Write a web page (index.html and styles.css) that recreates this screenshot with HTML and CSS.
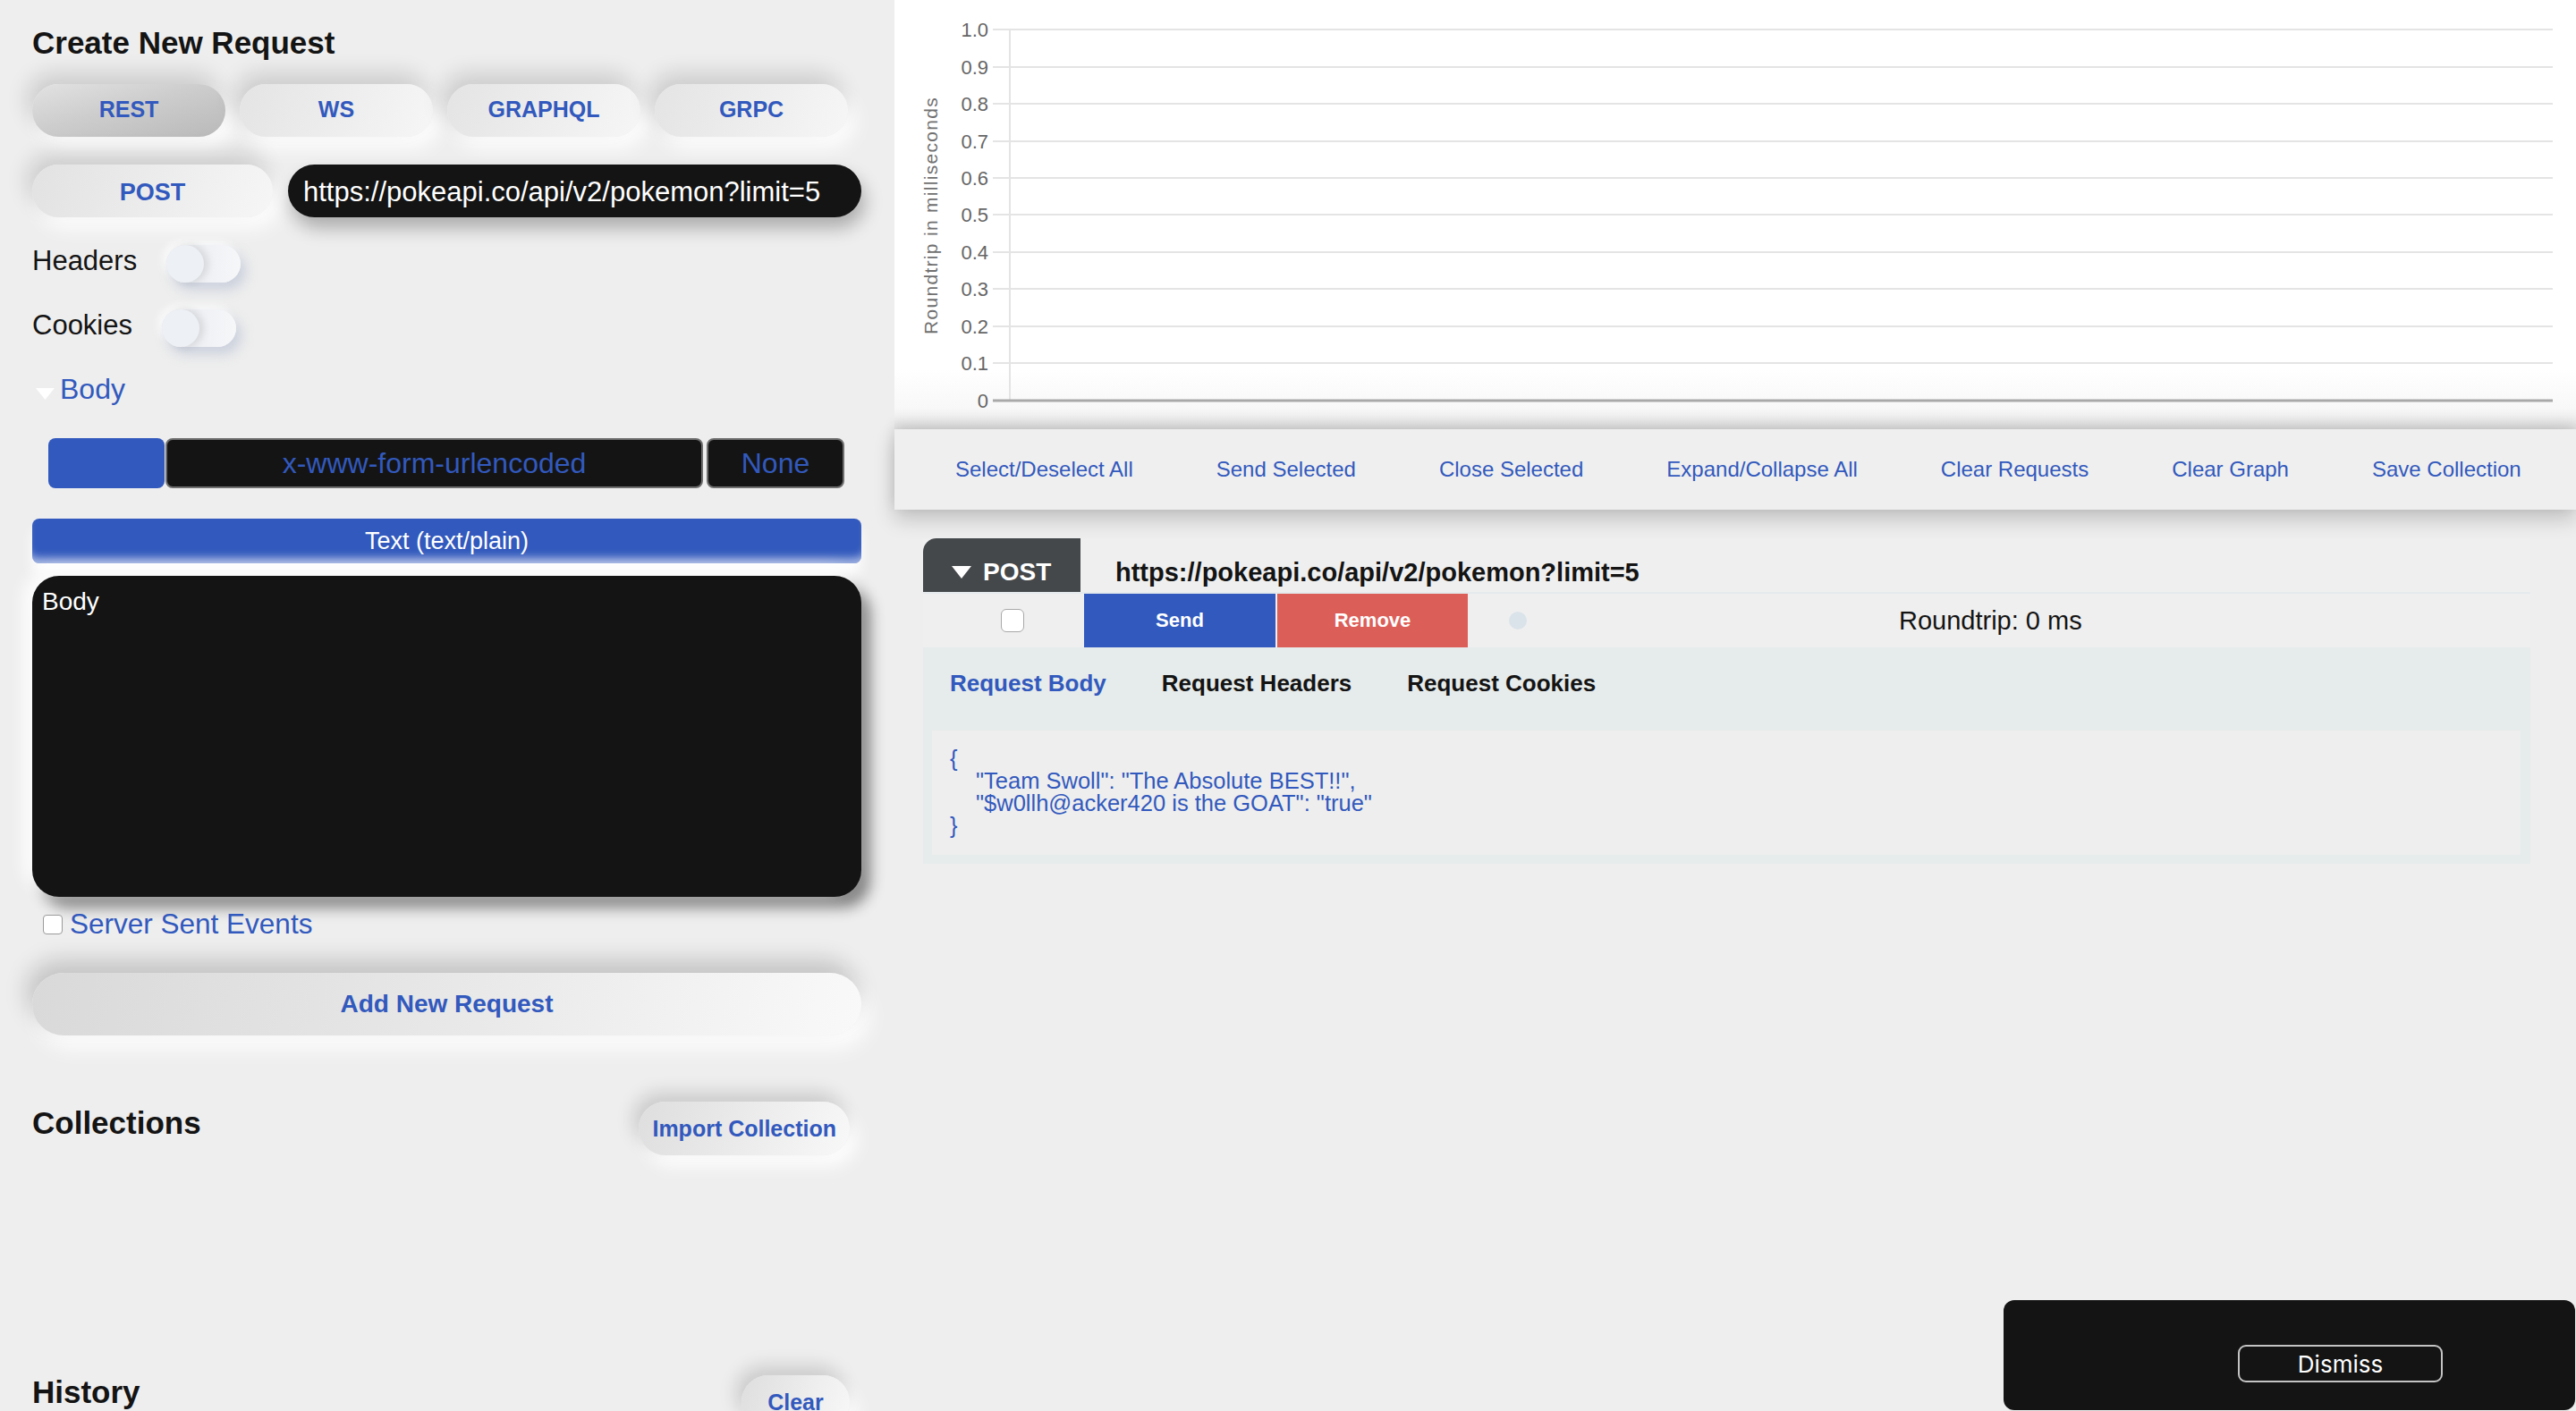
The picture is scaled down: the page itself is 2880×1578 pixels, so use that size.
FILE: index.html
```html
<!DOCTYPE html>
<html lang="en">
<head>
<meta charset="utf-8">
<title>Swell</title>
<link rel="stylesheet" href="styles.css">
</head>
<body>
<div class="app">
  <aside class="composer">
    <h1 class="title">Create New Request</h1>
    <div class="modes">
      <button class="mode active">REST</button>
      <button class="mode">WS</button>
      <button class="mode">GRAPHQL</button>
      <button class="mode">GRPC</button>
    </div>
    <div class="url-row">
      <button class="method">POST</button>
      <div class="url-input">https://pokeapi.co/api/v2/pokemon?limit=5</div>
    </div>
    <div class="toggle-row">
      <span class="toggle-label">Headers</span>
      <span class="toggle"><span class="knob"></span></span>
    </div>
    <div class="toggle-row cookies">
      <span class="toggle-label">Cookies</span>
      <span class="toggle"><span class="knob"></span></span>
    </div>
    <div class="body-summary">
      <svg class="caret" width="21" height="13" viewBox="0 0 21 13"><path d="M0 0H21L10.5 13Z" fill="#ffffff"/></svg>
      <span>Body</span>
    </div>
    <div class="body-type">
      <span class="seg seg-blue"></span>
      <span class="seg seg-dark seg-wide">x-www-form-urlencoded</span>
      <span class="seg seg-dark seg-none">None</span>
    </div>
    <div class="text-plain">Text (text/plain)</div>
    <div class="body-editor">Body</div>
    <label class="sse"><span class="check"></span>Server Sent Events</label>
    <button class="add-btn">Add New Request</button>
    <div class="section-head">
      <h2 class="section-title">Collections</h2>
      <button class="pill-btn">Import Collection</button>
    </div>
    <div class="section-head history">
      <h2 class="section-title">History</h2>
      <button class="pill-btn clear-btn">Clear</button>
    </div>
  </aside>

  <main class="workspace">
    <div class="chart">
      <svg class="chart-svg" width="1880" height="480" viewBox="0 0 1880 480">
        <g class="grid">
          <line x1="110" y1="33" x2="1854" y2="33"/>
          <line x1="110" y1="75" x2="1854" y2="75"/>
          <line x1="110" y1="116" x2="1854" y2="116"/>
          <line x1="110" y1="158" x2="1854" y2="158"/>
          <line x1="110" y1="199" x2="1854" y2="199"/>
          <line x1="110" y1="240" x2="1854" y2="240"/>
          <line x1="110" y1="282" x2="1854" y2="282"/>
          <line x1="110" y1="323" x2="1854" y2="323"/>
          <line x1="110" y1="365" x2="1854" y2="365"/>
          <line x1="110" y1="406" x2="1854" y2="406"/>
          <line x1="129" y1="33" x2="129" y2="448"/>
        </g>
        <line class="zero" x1="110" y1="448" x2="1854" y2="448"/>
        <g class="ticks">
          <text x="105" y="33">1.0</text>
          <text x="105" y="75">0.9</text>
          <text x="105" y="116">0.8</text>
          <text x="105" y="158">0.7</text>
          <text x="105" y="199">0.6</text>
          <text x="105" y="240">0.5</text>
          <text x="105" y="282">0.4</text>
          <text x="105" y="323">0.3</text>
          <text x="105" y="365">0.2</text>
          <text x="105" y="406">0.1</text>
          <text x="105" y="448">0</text>
        </g>
        <text class="axis-title" transform="translate(48 241) rotate(-90)">Roundtrip in milliseconds</text>
      </svg>
    </div>

    <nav class="toolbar">
      <span class="tool">Select/Deselect All</span>
      <span class="tool">Send Selected</span>
      <span class="tool">Close Selected</span>
      <span class="tool">Expand/Collapse All</span>
      <span class="tool">Clear Requests</span>
      <span class="tool">Clear Graph</span>
      <span class="tool">Save Collection</span>
    </nav>

    <section class="card">
      <div class="card-head">
        <div class="method-tab">
          <svg width="22" height="14" viewBox="0 0 22 14"><path d="M0 0H22L11 14Z" fill="#ffffff"/></svg>
          <span>POST</span>
        </div>
        <span class="card-url">https://pokeapi.co/api/v2/pokemon?limit=5</span>
      </div>
      <div class="card-actions">
        <div class="check-cell"><span class="card-check"></span></div>
        <button class="act send">Send</button>
        <button class="act remove">Remove</button>
        <span class="status-dot"></span>
        <span class="roundtrip">Roundtrip: 0 ms</span>
      </div>
      <div class="card-tabs">
        <span class="ctab active">Request Body</span>
        <span class="ctab">Request Headers</span>
        <span class="ctab">Request Cookies</span>
      </div>
      <div class="card-body">
        <div class="json"><div>{</div><div class="ind">"Team Swoll": "The Absolute BEST!!",</div><div class="ind">"$w0llh@acker420 is the GOAT": "true"</div><div>}</div></div>
      </div>
    </section>
  </main>
</div>

<div class="toast">
  <button class="dismiss">Dismiss</button>
</div>
</body>
</html>
```

FILE: styles.css
```css
* { box-sizing: border-box; }

html, body {
  margin: 0;
  height: 100%;
}

body {
  background: #eeeeee;
  font-family: "Liberation Sans", Arial, sans-serif;
  color: #141414;
  overflow: hidden;
}

button {
  font-family: "Liberation Sans", Arial, sans-serif;
  padding: 0;
  border: 0;
  cursor: pointer;
}

.app {
  display: grid;
  grid-template-columns: 1000px 1fr;
  height: 100vh;
  overflow: hidden;
}

/* ---------- left composer ---------- */
.composer {
  padding: 28px 37px 0 36px;
  display: flex;
  flex-direction: column;
}

.title {
  margin: 0;
  font-size: 35px;
  line-height: 40px;
  font-weight: 700;
  color: #141414;
}

.modes {
  margin-top: 26px;
  display: flex;
  gap: 16px;
}

.mode {
  width: 216px;
  height: 59px;
  border-radius: 30px;
  font-size: 25px;
  font-weight: 700;
  color: #3259bd;
  padding-bottom: 2px;
  background: linear-gradient(110deg, #e4e4e4 0%, #f6f6f6 100%);
  box-shadow: -6px -12px 24px rgba(0, 0, 0, 0.14), 8px 12px 22px rgba(255, 255, 255, 0.95);
}

.mode.active {
  background: linear-gradient(165deg, #e2e2e2 0%, #cdcdcd 45%, #b9b9b9 100%);
  box-shadow: -6px -12px 24px rgba(0, 0, 0, 0.14), 8px 12px 22px rgba(255, 255, 255, 0.9);
}

.url-row {
  margin-top: 31px;
  display: flex;
  gap: 17px;
  height: 59px;
}

.method {
  width: 269px;
  height: 59px;
  border-radius: 30px;
  font-size: 27px;
  font-weight: 700;
  color: #3259bd;
  padding-top: 4px;
  background: linear-gradient(110deg, #e2e2e2 0%, #f6f6f6 100%);
  box-shadow: -6px -12px 24px rgba(0, 0, 0, 0.14), 8px 12px 22px rgba(255, 255, 255, 0.95);
}

.url-input {
  flex: 1;
  height: 59px;
  border-radius: 30px;
  background: #141414;
  color: #ffffff;
  font-size: 31px;
  padding: 2px 0 0 17px;
  display: flex;
  align-items: center;
  box-shadow: 4px 12px 20px rgba(0, 0, 0, 0.28);
}

.toggle-row {
  margin-top: 31px;
  height: 42px;
  display: flex;
  align-items: center;
  gap: 33px;
  font-size: 31px;
}

.toggle-row.cookies { margin-top: 30px; }

.toggle-label { padding-bottom: 7px; }

.toggle {
  width: 83px;
  height: 42px;
  border-radius: 21px;
  background: linear-gradient(90deg, #e6e9ee 0%, #f6f7f9 100%);
  box-shadow: 6px 8px 14px rgba(160, 172, 200, 0.45), -4px -4px 10px rgba(255, 255, 255, 0.8);
  display: flex;
}

.knob {
  width: 42px;
  height: 42px;
  border-radius: 50%;
  background: #edf0f5;
  box-shadow: 5px 0 8px rgba(0, 0, 0, 0.1);
}

.body-summary {
  margin-top: 27px;
  height: 40px;
  display: flex;
  align-items: center;
  gap: 6px;
  font-size: 32px;
  color: #3259bd;
}

.caret { margin-left: 4px; margin-top: 10px; }

.body-type {
  margin: 35px 19px 0 18px;
  height: 56px;
  display: flex;
}

.seg {
  border-radius: 8px;
  height: 56px;
}

.seg-blue {
  width: 130px;
  background: #3259bd;
}

.seg-dark {
  background: #141414;
  border: 2px solid #6f6f6f;
  color: #3259bd;
  font-size: 32px;
  display: flex;
  align-items: center;
  justify-content: center;
}

.seg-wide {
  flex: 1;
  margin-left: 1px;
}

.seg-none {
  width: 154px;
  margin-left: 4px;
}

.text-plain {
  margin-top: 34px;
  height: 50px;
  border-radius: 8px;
  background: #3259bd;
  color: #ffffff;
  font-size: 27px;
  display: flex;
  align-items: center;
  justify-content: center;
  box-shadow: inset 0 -12px 10px -6px rgba(255, 255, 255, 0.55), 0 12px 14px rgba(255, 255, 255, 0.95);
}

.body-editor {
  margin-top: 14px;
  height: 359px;
  border-radius: 30px;
  background: #141414;
  color: #ffffff;
  font-size: 28px;
  line-height: 32px;
  padding: 13px 11px;
  box-shadow: -10px -6px 18px rgba(255, 255, 255, 0.9), 10px 12px 16px rgba(0, 0, 0, 0.45);
}

.sse {
  margin-top: 12px;
  height: 36px;
  display: flex;
  align-items: center;
  font-size: 31.5px;
  color: #3259bd;
}

.check {
  width: 22px;
  height: 22px;
  margin: 2px 8px 0 12px;
  border-radius: 4px;
  border: 1.5px solid #9a9a9a;
  background: #ffffff;
}

.add-btn {
  margin-top: 37px;
  height: 70px;
  border-radius: 35px;
  font-size: 28px;
  font-weight: 700;
  color: #3259bd;
  background: linear-gradient(100deg, #d9d9d9 0%, #e6e6e6 45%, #f9f9f9 100%);
  box-shadow: -6px -14px 26px rgba(0, 0, 0, 0.18), 8px 14px 24px rgba(255, 255, 255, 0.95);
}

.section-head {
  margin-top: 74px;
  padding-right: 13px;
  display: flex;
  justify-content: space-between;
  align-items: flex-start;
}

.section-head.history { margin-top: 246px; }

.section-title {
  margin: 4px 0 0;
  font-size: 35px;
  line-height: 40px;
  font-weight: 700;
  color: #141414;
}

.history .section-title { margin-top: -1px; }

.pill-btn {
  height: 60px;
  border-radius: 30px;
  padding: 0 15px;
  font-size: 25px;
  font-weight: 700;
  color: #3259bd;
  background: linear-gradient(110deg, #dedede 0%, #f8f8f8 100%);
  box-shadow: -6px -10px 20px rgba(0, 0, 0, 0.15), 8px 12px 20px rgba(255, 255, 255, 0.95);
}

.clear-btn { width: 121px; }

/* ---------- right workspace ---------- */
.workspace {
  display: flex;
  flex-direction: column;
  min-width: 0;
}

.chart {
  height: 480px;
  background: linear-gradient(180deg, #ffffff 0%, #ffffff 86%, #f8f8f8 95%, #e4e4e4 100%);
}

.chart-svg { display: block; }

.grid line {
  stroke: #e4e4e4;
  stroke-width: 2;
}

.zero {
  stroke: #a9a9a9;
  stroke-width: 3;
}

.ticks text {
  font-family: "Liberation Sans", Arial, sans-serif;
  font-size: 22px;
  fill: #666666;
  text-anchor: end;
  dominant-baseline: central;
}

.axis-title {
  font-family: "Liberation Sans", Arial, sans-serif;
  font-size: 21px;
  letter-spacing: 1.3px;
  fill: #707070;
  text-anchor: middle;
}

.toolbar {
  height: 90px;
  background: #efefef;
  display: flex;
  align-items: center;
  gap: 93px;
  padding-left: 68px;
  font-size: 24px;
  color: #3259bd;
  box-shadow: 0 -6px 14px rgba(0, 0, 0, 0.1), 0 10px 22px rgba(0, 0, 0, 0.2);
  position: relative;
}

.card {
  margin: 32px 51px 0 32px;
}

.card-head {
  height: 62px;
  display: flex;
  background: #efefef;
  border-bottom: 2px solid #e5eaed;
}

.method-tab {
  width: 176px;
  height: 60px;
  background: #45484b;
  border-radius: 15px 0 0 0;
  color: #ffffff;
  font-size: 28px;
  font-weight: 700;
  display: flex;
  align-items: center;
  gap: 13px;
  padding: 16px 0 0 32px;
}

.card-url {
  margin-left: 39px;
  padding-top: 16px;
  font-size: 29px;
  font-weight: 700;
  color: #141414;
  display: flex;
  align-items: center;
}

.card-actions {
  height: 60px;
  display: flex;
  background: #efefef;
}

.check-cell {
  width: 180px;
  display: flex;
  align-items: center;
  padding-left: 87px;
}

.card-check {
  width: 26px;
  height: 26px;
  border-radius: 6px;
  border: 1.5px solid #a8a8a8;
  background: #ffffff;
}

.act {
  height: 60px;
  font-size: 22px;
  font-weight: 700;
  color: #ffffff;
}

.send {
  width: 214px;
  background: #3259bd;
}

.remove {
  width: 213px;
  margin-left: 2px;
  background: #dc5e58;
}

.status-dot {
  width: 20px;
  height: 20px;
  border-radius: 50%;
  background: #dbe3ea;
  align-self: center;
  margin-left: 46px;
}

.roundtrip {
  align-self: center;
  margin-left: 416px;
  font-size: 29px;
  color: #141414;
}

.card-tabs {
  height: 93px;
  background: #e6ebeb;
  display: flex;
  gap: 62px;
  padding: 25px 0 0 30px;
  font-size: 26px;
  line-height: 30px;
  font-weight: 700;
  color: #141414;
}

.ctab.active { color: #3259bd; }

.card-body {
  background: #e6ebeb;
  padding: 0 11px 10px 10px;
}

.json {
  background: #eeeeee;
  padding: 19px 20px 20px;
  font-size: 25.5px;
  line-height: 25px;
  color: #3259bd;
  white-space: pre;
}

.json .ind { padding-left: 29px; }

/* ---------- toast ---------- */
.toast {
  position: fixed;
  right: 1px;
  bottom: 1px;
  width: 639px;
  height: 123px;
  border-radius: 12px;
  background: #141414;
  padding: 50px 0 0 262px;
}

.dismiss {
  width: 229px;
  height: 42px;
  border: 2px solid #c4c4c4;
  border-radius: 9px;
  background: transparent;
  color: #ffffff;
  font-family: Inter, "Liberation Sans", sans-serif;
  font-size: 26px;
}
```
